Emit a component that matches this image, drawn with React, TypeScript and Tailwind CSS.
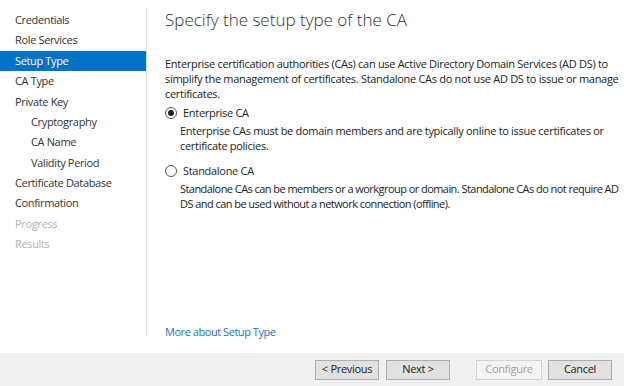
import React from "react";

const navItems: { label: string; indent?: boolean; selected?: boolean; disabled?: boolean }[] = [
  { label: "Credentials" },
  { label: "Role Services" },
  { label: "Setup Type", selected: true },
  { label: "CA Type" },
  { label: "Private Key" },
  { label: "Cryptography", indent: true },
  { label: "CA Name", indent: true },
  { label: "Validity Period", indent: true },
  { label: "Certificate Database" },
  { label: "Confirmation" },
  { label: "Progress", disabled: true },
  { label: "Results", disabled: true },
];

function Radio({ checked }: { checked?: boolean }) {
  return (
    <span className="flex h-[12px] w-[12px] items-center justify-center rounded-full border border-[#555] bg-white">
      {checked && <span className="h-[6px] w-[6px] rounded-full bg-[#222]" />}
    </span>
  );
}

export default function App() {
  return (
    <div
      className="flex h-[386px] w-[624px] flex-col bg-white text-[#1e1e1e]"
      style={{ fontFamily: '"Open Sans", "Noto Sans", sans-serif' }}
    >
      <div className="flex flex-1 pt-[8px] pb-[17px]">
        <div className="flex w-[147px] shrink-0 flex-col border-r border-[#e3e3e3] pt-[2px]">
          {navItems.map((it) => (
            <div
              key={it.label}
              className={
                "flex h-[20.4px] items-center whitespace-nowrap text-[11px] tracking-[-0.35px] " +
                (it.indent ? "pl-[31px] " : "pl-[15px] ") +
                (it.selected
                  ? "bg-[#0072c6] text-white "
                  : it.disabled
                  ? "text-[#b4b4b4] "
                  : "text-[#333] ")
              }
            >
              {it.label}
            </div>
          ))}
        </div>
        <div className="flex min-w-0 flex-1 flex-col pl-[18px] pr-[6px] text-[11px] leading-[15px] tracking-[-0.3px]">
          <div className="mt-[1px] text-[17px] font-light leading-[22px] tracking-normal text-[#333]">
            Specify the setup type of the CA
          </div>
          <p className="mt-[25px] whitespace-nowrap text-[#222]">
            Enterprise certification authorities (CAs) can use Active Directory Domain Services (AD DS) to
            <br />
            simplify the management of certificates. Standalone CAs do not use AD DS to issue or manage
            <br />
            certificates.
          </p>
          <div className="mt-[4px] flex items-center gap-[6px]">
            <Radio checked />
            <span>Enterprise CA</span>
          </div>
          <p className="mt-[3px] whitespace-nowrap pl-[15px] text-[#222]">
            Enterprise CAs must be domain members and are typically online to issue certificates or
            <br />
            certificate policies.
          </p>
          <div className="mt-[10px] flex items-center gap-[6px]">
            <Radio />
            <span>Standalone CA</span>
          </div>
          <p className="mt-[3px] whitespace-nowrap pl-[15px] tracking-[-0.55px] text-[#222]">
            Standalone CAs can be members or a workgroup or domain. Standalone CAs do not require AD
            <br />
            DS and can be used without a network connection (offline).
          </p>
          <div className="flex-1" />
          <a className="-mb-[3px] tracking-[-0.45px] text-[#1a73c4]">More about Setup Type</a>
        </div>
      </div>
      <div className="flex h-[33px] items-center justify-end bg-[#f0f0f0] pr-[12px] text-[11px] tracking-[-0.3px]">
        <button className="h-[20px] w-[64px] border border-[#adadad] bg-[#e1e1e1] text-[#222]">
          &lt; Previous
        </button>
        <button className="ml-[7px] h-[20px] w-[64px] border border-[#adadad] bg-[#e1e1e1] text-[#222]">
          Next &gt;
        </button>
        <button className="ml-[26px] h-[20px] w-[66px] border border-[#d3d3d3] bg-[#f4f4f4] text-[#a0a0a0]">
          Configure
        </button>
        <button className="ml-[6px] h-[20px] w-[64px] border border-[#adadad] bg-[#e1e1e1] text-[#222]">
          Cancel
        </button>
      </div>
    </div>
  );
}
